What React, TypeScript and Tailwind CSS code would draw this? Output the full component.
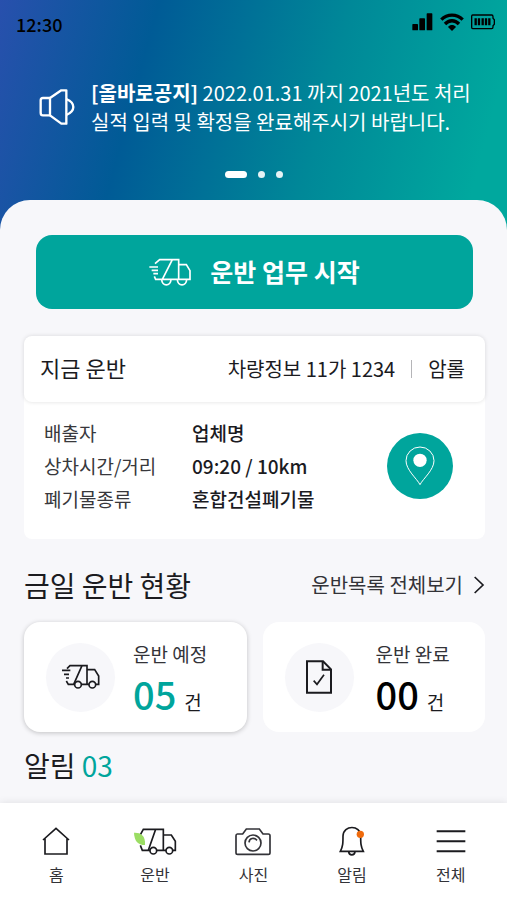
import React from "react";

const font = "font-['Noto_Sans_CJK_KR','Noto_Sans',sans-serif]";

const SignalIcon = () => (
    <svg className="w-[21px] h-[18px]" viewBox="0 0 63 54" fill="#000">
        <rect x="1" y="33" width="17" height="19" rx="2" />
        <rect x="22" y="16" width="17" height="36" rx="2" />
        <rect x="44" y="1" width="17" height="51" rx="2" />
    </svg>
)

const WifiIcon = () => (
    <svg className="w-6 h-[18px]" viewBox="0 0 72 54" fill="none" stroke="#000" strokeWidth="10">
        <path d="M4 20C22 2 50 2 68 20" />
        <path d="M15 33C27 20 45 20 57 33" />
        <path d="M24 42C31 34 41 34 48 42L36 54Z" fill="#000" stroke="none" />
    </svg>
)

const BatteryIcon = () => (
    <svg className="w-6 h-4" viewBox="0 0 72 48" fill="none" stroke="#000" strokeWidth="4">
        <path d="M5 3H62Q66 3 66 8V13L70 17V31L66 35V39Q66 44 62 44H5Q2 44 2 40V7Q2 3 5 3Z" />
        <path d="M14 13V34M24 13V34M35 13V34M45 13V34M55 13V34" strokeWidth="7" />
    </svg>
)

const SpeakerIcon = () => (
    <svg className="w-9 h-9 shrink-0" viewBox="0 0 108 108" fill="none" stroke="#fff" strokeWidth="7" strokeLinejoin="round">
        <path d="M33 27H12Q5 27 5 34V71Q5 79 12 79H33" />
        <path d="M33 27L67 4H82V104H67L33 79Z" />
        <path d="M82 30Q103 39 103 54Q103 69 82 78" />
    </svg>
)

const FastTruckIcon = () => (
    <svg className="w-10 h-[26px]" viewBox="0 0 120 78" fill="none" stroke="#1b1b1f" strokeWidth="5">
        <path d="M18 14L27 5H78V61M63 5L38 61M78 17H101L113 36V61H104M61 61H84M16 51L22 61H41" />
        <path d="M3 19H28M9 31H24M15 42H24" />
        <circle cx="51" cy="62" r="10" />
        <circle cx="94" cy="62" r="10" />
    </svg>
)

const StartTruckIcon = () => (
    <svg className="w-[42px] h-[30px]" viewBox="0 0 126 90" fill="none" stroke="#fff" strokeWidth="5">
        <path d="M18 20L32 8H89V67M70 8L40 67M89 23H112L123 41V67H20L16 58" />
        <path d="M1 30H27M8 40H27M13 50H27" />
        <path d="M38 67C38 89 66 89 66 67M85 67C85 89 113 89 113 67" />
    </svg>
)

const PinIcon = () => (
    <svg className="w-[30px] h-10" viewBox="0 0 90 120" fill="none" stroke="#fff" strokeWidth="3">
        <path d="M45 116C36 98 3 72 3 44A42 41 0 0 1 87 44C87 72 54 98 45 116Z" />
        <circle cx="45" cy="43" r="20" fill="#fff" stroke="none" />
    </svg>
)

const DocIcon = () => (
    <svg className="w-[26px] h-[34px]" viewBox="0 0 78 102" fill="none" stroke="#1b1b1f" strokeWidth="6">
        <path d="M3 4H51L75 28V98H3Z" />
        <path d="M50 5V29H74" />
        <path d="M23 62L33 73L54 44" strokeWidth="5" />
    </svg>
)

const HomeIcon = () => (
    <svg className="w-7 h-[30px]" viewBox="0 0 84 90" fill="none" stroke="#1b1b1f" strokeWidth="5">
        <path d="M3 42L42 7L81 42M9 38V84H75V38" />
    </svg>
)

const LeafTruckIcon = () => (
    <svg className="w-[44px] h-[30px]" viewBox="0 0 132 90" fill="none" stroke="#1b1b1f" strokeWidth="5">
        <path d="M21 28L31 10H91V73M68 10L46 73M91 27H115L127 46V73H119M22 58L28 73H51M71 73H99" />
        <circle cx="61" cy="74" r="10" />
        <circle cx="109" cy="74" r="10" />
        <path d="M3 20C22 19 38 27 36 57C14 57 4 44 3 20Z" fill="#9bdd63" stroke="none" />
    </svg>
)

const CameraIcon = () => (
    <svg className="w-9 h-[30px]" viewBox="0 0 108 90" fill="none" stroke="#333338" strokeWidth="5">
        <path d="M7 24H23L34 9H73L84 24H100Q105 24 105 29V80Q105 85 100 85H8Q3 85 3 80V29Q3 24 7 24Z" />
        <circle cx="54" cy="51" r="24" />
        <path d="M42 49C43 36 57 33 66 43" />
    </svg>
)

const BellIcon = () => (
    <svg className="w-[26px] h-[30px]" viewBox="0 0 78 90" fill="none" stroke="#1b1b1f" strokeWidth="5">
        <path d="M4 76C12 60 12 51 12 30C13 -4 65 -4 65 30C65 51 65 60 73 76Z" />
        <path d="M29 77C30 90 47 90 48 77" />
        <circle cx="64" cy="25" r="11" fill="#ef6a0c" stroke="none" />
    </svg>
)

const MenuIcon = () => (
    <svg className="w-[30px] h-[30px]" viewBox="0 0 90 90" fill="none" stroke="#1b1b1f" strokeWidth="6">
        <path d="M2 16H88M2 46H88M2 76H88" />
    </svg>
)

const navItems = [
    { label: '홈', icon: <HomeIcon /> },
    { label: '운반', icon: <LeafTruckIcon /> },
    { label: '사진', icon: <CameraIcon /> },
    { label: '알림', icon: <BellIcon /> },
    { label: '전체', icon: <MenuIcon /> },
]

const details = [
    { name: '배출자', value: '업체명' },
    { name: '상차시간/거리', value: '09:20 / 10km' },
    { name: '폐기물종류', value: '혼합건설폐기물' },
]

const App: React.FC = () => {
    return (
        <div className={`min-h-screen flex flex-col bg-[#f7f7fa] text-[#1b1b1f] ${font}`}>
            <header className="pb-[54px] bg-[linear-gradient(105deg,#2850ad_0%,#005b96_28%,#008898_62%,#00a89e_92%)]">
                <div className="flex items-center justify-between h-12 pl-4 pr-3 text-black">
                    <span className="text-lg font-medium">12:30</span>
                    <div className="flex items-center gap-[7px] pb-1">
                        <SignalIcon />
                        <WifiIcon />
                        <BatteryIcon />
                    </div>
                </div>
                <div className="flex items-center gap-4 mt-[30px] pl-[39px] pr-6 text-white">
                    <SpeakerIcon />
                    <p className="text-xl leading-[29px]">
                        <b>[올바로공지]</b> 2022.01.31 까지 2021년도 처리<br />
                        실적 입력 및 확정을 완료해주시기 바랍니다.
                    </p>
                </div>
                <div className="flex items-center justify-center gap-[11px] h-2 mt-[34px]">
                    <button aria-label="1" className="w-[22px] h-[7px] rounded-full bg-white" />
                    <button aria-label="2" className="w-[7px] h-[7px] rounded-full bg-white/90" />
                    <button aria-label="3" className="w-[7px] h-[7px] rounded-full bg-white/90" />
                </div>
            </header>

            <main className="flex-1 -mt-8 pt-[35px] pl-6 pr-[22px] rounded-t-[30px] bg-[#f7f7fa]">
                <div className="px-3">
                    <button className="flex items-center justify-center gap-[19px] w-full h-[74px] rounded-2xl bg-[#00a59c] text-white text-[25px] font-bold">
                        <StartTruckIcon />
                        운반 업무 시작
                    </button>
                </div>

                <section className="mt-[27px] rounded-lg bg-white">
                    <div className="flex items-center justify-between h-[66px] pl-4 pr-5 rounded-lg shadow-[0_0_4px_rgba(0,0,0,0.13)]">
                        <h2 className="text-[22px] pb-1">지금 운반</h2>
                        <div className="flex items-center text-xl">
                            <span>차량정보 11가 1234</span>
                            <span className="w-px h-[18px] mx-4 bg-[#b5b5b8]" />
                            <span>암롤</span>
                        </div>
                    </div>
                    <div className="flex items-center justify-between h-[137px] pl-5 pr-8 pb-[10px]">
                        <dl className="text-[19px] leading-[33px]">
                            {details.map((d) => (
                                <div key={d.name} className="flex">
                                    <dt className="w-[148px] text-[#38383c]">{d.name}</dt>
                                    <dd className="font-medium">{d.value}</dd>
                                </div>
                            ))}
                        </dl>
                        <button aria-label="위치" className="flex items-center justify-center w-[66px] h-[66px] rounded-full bg-[#00a59c]">
                            <PinIcon />
                        </button>
                    </div>
                </section>

                <div className="flex items-center justify-between mt-6 h-11">
                    <h2 className="text-[28px]">금일 운반 현황</h2>
                    <a href="#" className="flex items-center gap-[10px] text-xl text-[#333338]">
                        운반목록 전체보기
                        <svg className="w-3 h-[18px]" viewBox="0 0 36 54" fill="none" stroke="#1b1b1f" strokeWidth="5">
                            <path d="M5 3L30 27L5 51" />
                        </svg>
                    </a>
                </div>

                <div className="grid grid-cols-2 gap-4 mt-[15px]">
                    <div className="flex items-center gap-[18px] h-[110px] pl-[22px] rounded-2xl bg-white shadow-[0_1px_5px_rgba(0,0,0,0.22)]">
                        <div className="flex items-center justify-center w-[69px] h-[69px] rounded-full bg-[#f7f7fa]">
                            <FastTruckIcon />
                        </div>
                        <div className="pt-[14px]">
                            <p className="text-[19px] leading-7 text-[#333338]">운반 예정</p>
                            <p className="text-[19px] leading-[52px]">
                                <span className="mr-2 text-[38px] font-medium text-[#00a59c]">05</span>건
                            </p>
                        </div>
                    </div>
                    <div className="flex items-center gap-[22px] h-[110px] pl-[22px] rounded-2xl bg-white">
                        <div className="flex items-center justify-center w-[69px] h-[69px] rounded-full bg-[#f7f7fa]">
                            <DocIcon />
                        </div>
                        <div className="pt-[14px]">
                            <p className="text-[19px] leading-7 text-[#333338]">운반 완료</p>
                            <p className="text-[19px] leading-[52px]">
                                <span className="mr-2 text-[38px] font-medium text-black">00</span>건
                            </p>
                        </div>
                    </div>
                </div>

                <h2 className="mt-3 text-[28px] leading-[42px]">
                    알림 <span className="text-[#00a59c]">03</span>
                </h2>
            </main>

            <nav className="sticky bottom-0 grid grid-cols-5 h-[97px] px-[7px] bg-white shadow-[0_0_8px_rgba(0,0,0,0.1)]">
                {navItems.map((item) => (
                    <a key={item.label} href="#" className="flex flex-col items-center gap-[6px] pt-[23px] text-base text-[#333338]">
                        {item.icon}
                        <span>{item.label}</span>
                    </a>
                ))}
            </nav>
        </div>
    )
}

export default App;
